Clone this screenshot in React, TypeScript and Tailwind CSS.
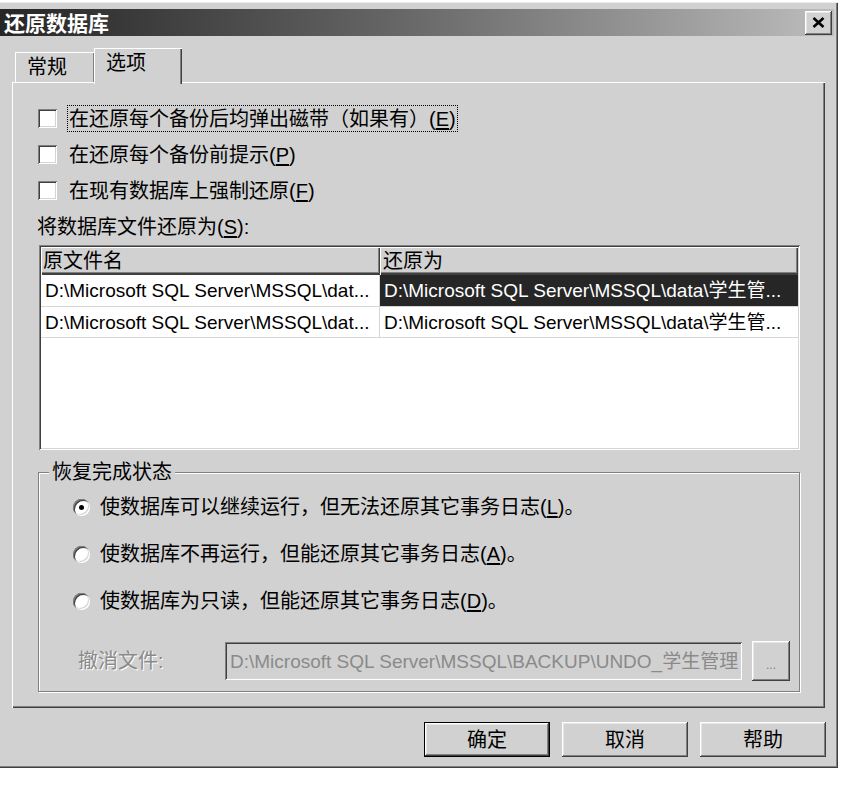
import React from "react";

const raised =
  "shadow-[inset_-1px_-1px_0_#404040,inset_1px_1px_0_#ffffff,inset_-2px_-2px_0_#808080,inset_2px_2px_0_#e6e6e6]";
const sunken =
  "shadow-[inset_1px_1px_0_#808080,inset_-1px_-1px_0_#ffffff,inset_2px_2px_0_#404040,inset_-2px_-2px_0_#d4d4d4]";

function Check() {
  return <span className={"block w-[19px] h-[19px] bg-white shrink-0 " + sunken} />;
}

function Radio({ checked }: { checked?: boolean }) {
  return (
    <span
      className={
        "relative block w-[17px] h-[17px] rounded-full bg-white shrink-0 shadow-[inset_1px_1px_0_#808080,inset_-1px_-1px_0_#ffffff,inset_2px_2px_0_#404040,inset_-2px_-2px_0_#d4d4d4]"
      }
    >
      {checked && (
        <span className="absolute left-[6px] top-[6px] w-[5px] h-[5px] rounded-full bg-black" />
      )}
    </span>
  );
}

function U({ children }: { children: React.ReactNode }) {
  return <span className="underline underline-offset-[2px]">{children}</span>;
}

function Btn({ children, def }: { children: React.ReactNode; def?: boolean }) {
  return (
    <div
      className={
        "w-[126px] h-[35px] flex items-center justify-center text-[20px] leading-none bg-[#d1d1d1] " +
        (def ? "border border-black " : "") +
        raised
      }
    >
      {children}
    </div>
  );
}

export default function App() {
  return (
    <div className="w-[841px] h-[788px] bg-white overflow-hidden text-black font-['Liberation_Sans','Noto_Sans_CJK_SC',sans-serif]">
      <div className="mt-[2px] w-[838px] h-[766px] bg-[#d1d1d1] flex flex-col shadow-[inset_0_1px_0_#ececec,inset_-1px_-1px_0_#404040,inset_-2px_-2px_0_#808080]">
        {/* title bar */}
        <div className="mt-[7px] mr-[4px] h-[27px] flex items-center bg-linear-to-r from-[#262626] via-[#6a6a6a] to-[#bdbdbd]">
          <span className="pl-[4px] text-white font-bold text-[21px] leading-none font-['Noto_Sans_CJK_SC',sans-serif]">
            还原数据库
          </span>
          <div
            className={
              "ml-auto mr-[2px] w-[27px] h-[24px] bg-[#d1d1d1] flex items-center justify-center " + raised
            }
          >
            <svg width="13" height="11" viewBox="0 0 13 11">
              <path d="M1.5 1 L11.5 10 M11.5 1 L1.5 10" stroke="#000" strokeWidth="2.6" fill="none" />
            </svg>
          </div>
        </div>

        {/* tabs */}
        <div className="mt-[12px] pl-[15px] h-[34px] flex items-end">
          <div className="w-[80px] h-[30px] pl-[12px] pt-[3px] text-[20px] leading-[24px] shadow-[inset_1px_1px_0_#ffffff,inset_-1px_0_0_#404040,inset_-2px_0_0_#808080]">
            常规
          </div>
          <div className="relative z-10 -ml-[1px] -mb-[2px] w-[88px] h-[36px] pl-[12px] pt-[3px] bg-[#d1d1d1] text-[20px] leading-[24px] shadow-[inset_1px_1px_0_#ffffff,inset_-1px_0_0_#404040,inset_-2px_0_0_#808080]">
            选项
          </div>
        </div>

        {/* panel */}
        <div className="ml-[12px] w-[813px] h-[626px] flex flex-col pl-[26px] shadow-[inset_1px_1px_0_#ffffff,inset_-1px_-1px_0_#404040,inset_-2px_-2px_0_#808080]">
          <div className="mt-[23px] flex flex-col gap-[9px] text-[20px]">
            <div className="flex items-center h-[27px]">
              <Check />
              <span className="ml-[10px] h-full px-[1px] flex items-center border border-dotted border-black leading-none">
                在还原每个备份后均弹出磁带（如果有）(<U>E</U>)
              </span>
            </div>
            <div className="flex items-center h-[27px]">
              <Check />
              <span className="ml-[10px] h-full px-[1px] flex items-center border border-transparent leading-none">
                在还原每个备份前提示(<U>P</U>)
              </span>
            </div>
            <div className="flex items-center h-[27px]">
              <Check />
              <span className="ml-[10px] h-full px-[1px] flex items-center border border-transparent leading-none">
                在现有数据库上强制还原(<U>F</U>)
              </span>
            </div>
          </div>
          <div className="mt-[9px] h-[27px] -ml-[1px] flex items-center text-[20px] leading-none">
            将数据库文件还原为(<U>S</U>):
          </div>

          {/* list view */}
          <div className={"mt-[5px] ml-[1px] w-[761px] h-[205px] bg-white p-[2px] " + sunken}>
            <div className="flex h-[28px] bg-[#d1d1d1] text-[20px] leading-none">
              <div className="w-[339px] h-full pl-[2px] flex items-center shadow-[inset_1px_1px_0_#ffffff,inset_-1px_-2px_0_#404040,inset_-2px_-3px_0_#808080]">
                原文件名
              </div>
              <div className="flex-1 h-full pl-[3px] flex items-center shadow-[inset_1px_1px_0_#ffffff,inset_-1px_-2px_0_#404040,inset_-2px_-3px_0_#808080]">
                还原为
              </div>
            </div>
            <div className="flex h-[32px] border-b border-[#d6d6d6] text-[19px] leading-none whitespace-nowrap">
              <div className="w-[339px] h-full pl-[4px] flex items-center border-r border-[#d6d6d6] overflow-hidden">
                D:\Microsoft SQL Server\MSSQL\dat...
              </div>
              <div className="flex-1 h-full pl-[4px] flex items-center bg-[#262626] text-white overflow-hidden">
                D:\Microsoft SQL Server\MSSQL\data\学生管...
              </div>
            </div>
            <div className="flex h-[31px] border-b border-[#d6d6d6] text-[19px] leading-none whitespace-nowrap">
              <div className="w-[339px] h-full pl-[4px] flex items-center border-r border-[#d6d6d6] overflow-hidden">
                D:\Microsoft SQL Server\MSSQL\dat...
              </div>
              <div className="flex-1 h-full pl-[4px] flex items-center overflow-hidden">
                D:\Microsoft SQL Server\MSSQL\data\学生管...
              </div>
            </div>
          </div>

          {/* group box */}
          <div className="relative mt-[22px] w-[762px] h-[220px] border border-[#808080] shadow-[1px_1px_0_#ffffff,inset_1px_1px_0_#ffffff] flex flex-col pt-[19px] pl-[34px] text-[20px]">
            <span className="absolute left-[10px] -top-[14px] px-[3px] bg-[#d1d1d1] leading-[27px]">
              恢复完成状态
            </span>
            <div className="flex flex-col gap-[17px]">
              <div className="flex items-center h-[30px] gap-[10px] leading-none">
                <Radio checked />
                <span>使数据库可以继续运行，但无法还原其它事务日志(<U>L</U>)。</span>
              </div>
              <div className="flex items-center h-[30px] gap-[10px] leading-none">
                <Radio />
                <span>使数据库不再运行，但能还原其它事务日志(<U>A</U>)。</span>
              </div>
              <div className="flex items-center h-[30px] gap-[10px] leading-none">
                <Radio />
                <span>使数据库为只读，但能还原其它事务日志(<U>D</U>)。</span>
              </div>
            </div>
            <div className="mt-[25px] flex items-center h-[40px]">
              <span className="ml-[5px] w-[147px] text-[#8a8a8a] leading-none [text-shadow:1px_1px_0_#ffffff]">
                撤消文件:
              </span>
              <div
                className={
                  "w-[517px] h-[38px] pl-[5px] flex items-center bg-[#d1d1d1] text-[#8a8a8a] text-[19px] leading-none whitespace-nowrap overflow-hidden " +
                  sunken
                }
              >
                D:\Microsoft SQL Server\MSSQL\BACKUP\UNDO_学生管理
              </div>
              <div
                className={
                  "ml-[10px] w-[38px] h-[40px] flex items-end justify-center pb-[10px] text-[12px] leading-none text-[#808080] bg-[#d1d1d1] " +
                  raised
                }
              >
                ...
              </div>
            </div>
          </div>
        </div>

        {/* buttons */}
        <div className="mt-[14px] flex justify-end gap-[12px] pr-[12px]">
          <Btn def>确定</Btn>
          <Btn>取消</Btn>
          <Btn>帮助</Btn>
        </div>
      </div>
    </div>
  );
}
